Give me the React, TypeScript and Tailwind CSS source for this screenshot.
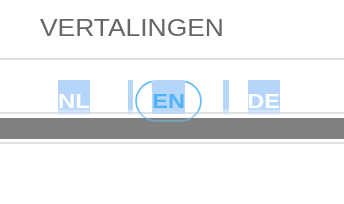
import React from "react";

const fade =
  "[mask-image:linear-gradient(to_bottom,black_0,black_28px,transparent_36px)]";

export default function App() {
  return (
    <div className="w-[344px] h-[204px] bg-white overflow-hidden font-['Liberation_Sans',Arial,sans-serif]">
      <div className="h-[58px] pl-[40px] pt-[16px]">
        <span className="inline-block origin-left scale-x-[1.1] text-[24px] leading-[24px] text-[#666666]">
          VERTALINGEN
        </span>
      </div>
      <div className="h-[2px] bg-[#dedede]" />
      <div className="h-[52px] relative z-10">
        <div className="flex items-start pt-[20px]">
          <span
            className={`ml-[58px] w-[32px] h-[36px] bg-[#b5d5fb] pt-[10px] flex justify-center ${fade}`}
          >
            <span className="inline-block scale-x-[1.14] text-[21px] leading-[21px] font-bold text-white">
              NL
            </span>
          </span>
          <span className={`ml-[38px] w-[5px] h-[36px] bg-[#b5d5fb] ${fade}`} />
          <span
            className="ml-[2px] w-[67px] h-[42px] rounded-full border-2 border-[#6cbff6] flex justify-center [mask-image:linear-gradient(to_bottom,black_0,black_28px,rgba(0,0,0,0.45)_42px)]"
          >
            <span className="w-[33px] h-[34px] -mt-[2px] bg-[#b5d5fb] pt-[10px] flex justify-center">
              <span className="inline-block scale-x-[1.12] text-[21px] leading-[21px] font-bold text-[#4fb4f6]">
                EN
              </span>
            </span>
          </span>
          <span className={`ml-[21px] w-[6px] h-[36px] bg-[#b5d5fb] ${fade}`} />
          <span
            className={`ml-[19px] w-[32px] h-[36px] bg-[#b5d5fb] pt-[10px] flex justify-center ${fade}`}
          >
            <span className="inline-block scale-x-[1.12] text-[21px] leading-[21px] font-bold text-white">
              DE
            </span>
          </span>
        </div>
      </div>
      <div className="h-[2px] bg-[#e2e2e2]" />
      <div className="h-[4px]" />
      <div className="h-[21px] bg-[#808080]" />
      <div className="h-[3px]" />
      <div className="h-[2px] bg-[#e0e0e0]" />
    </div>
  );
}
